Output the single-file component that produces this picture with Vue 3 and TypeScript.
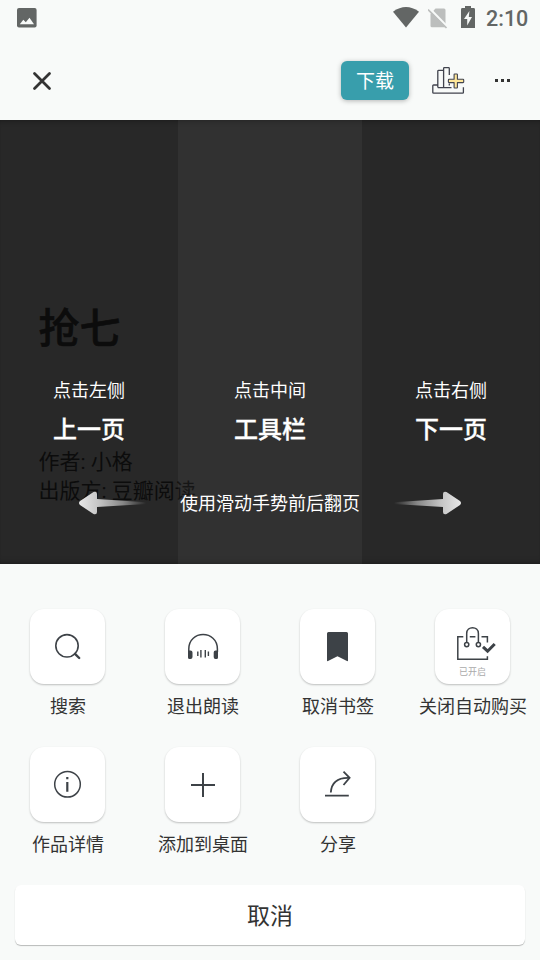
<script setup lang="ts">
interface Zone { hint: string; action: string }
interface Tool { id: string; label: string; note?: string }

const zones: Zone[] = [
  { hint: '点击左侧', action: '上一页' },
  { hint: '点击中间', action: '工具栏' },
  { hint: '点击右侧', action: '下一页' },
]

const tools: Tool[] = [
  { id: 'search', label: '搜索' },
  { id: 'listen', label: '退出朗读' },
  { id: 'bookmark', label: '取消书签' },
  { id: 'autobuy', label: '关闭自动购买', note: '已开启' },
  { id: 'info', label: '作品详情' },
  { id: 'add', label: '添加到桌面' },
  { id: 'share', label: '分享' },
]
</script>

<template>
  <div class="screen">
    <div class="status">
      <svg class="picture" width="20" height="20" viewBox="0 0 20 20">
        <rect width="19.6" height="19.6" rx="2" fill="#636665" />
        <path d="M2.8 16.3 6.3 11.8 8.8 14.2 12.5 9.8 17 16.3Z" fill="#f8faf9" />
      </svg>
      <svg class="wifi" width="26" height="21" viewBox="0 0 26 21">
        <path d="M0 4.7Q13-4.6 26 4.7L13 20.6Z" fill="#636665" />
      </svg>
      <svg class="sim" width="20" height="21" viewBox="0 0 20 21">
        <path d="M7.5.5H16Q17.5.5 17.5 2V19.3H4Q2.5 19.3 2.5 17.8V6Z" fill="#bcbebd" />
        <path d="M1 0 20 19.5" stroke="#f8faf9" stroke-width="2.4" />
        <path d="M0 1.5 18.5 20" stroke="#bcbebd" stroke-width="1.7" />
      </svg>
      <svg class="battery" width="14" height="22" viewBox="0 0 14 22">
        <path d="M4 0H10V2H12.6Q14 2 14 3.4V22H0V3.4Q0 2 1.4 2H4Z" fill="#636665" />
        <path d="M8.4 5 3 13H6.2V19.4L11 11H7.8Z" fill="#f8faf9" />
      </svg>
      <span class="clock">2:10</span>
    </div>

    <header class="bar">
      <svg class="close" width="20" height="20" viewBox="0 0 20 20">
        <path d="M2.5 2.5 17.5 17.5M17.5 2.5 2.5 17.5" stroke="#333" stroke-width="2.8" stroke-linecap="round" />
      </svg>
      <button class="download">下载</button>
      <svg class="shelf" width="34" height="30" viewBox="0 0 34 30" fill="none" stroke="#41434e" stroke-width="1.3" stroke-linejoin="round">
        <path d="M5.8 22.6V6.2Q5.8 5.4 6.6 5.4H11.6M11.6 22.6V3.5Q11.6 2.7 12.4 2.7H16.5Q17.3 2.7 17.3 3.5V10M17.3 18.5V20.5M5.8 22.7H19.5M5.8 20H1.6Q.8 20 .8 20.8V27.4Q.8 28.2 1.6 28.2H30.6Q31.4 28.2 31.4 27.4V22.3" />
        <path d="M22.6 9H24.9Q25.4 9 25.4 9.5V14.3H31Q31.7 14.3 31.7 15V17Q31.7 17.6 31 17.6H25.4V22.5Q25.4 23 24.9 23H22.6Q22.1 23 22.1 22.5V17.6H17Q16.4 17.6 16.4 17V15Q16.4 14.3 17 14.3H22.1V9.5Q22.1 9 22.6 9Z" fill="#ffe79a" stroke-width="1.1" />
      </svg>
      <div class="more"><i></i><i></i><i></i></div>
    </header>

    <main class="reader">
      <div class="book">
        <h1>抢七</h1>
        <p>作者: 小格</p>
        <p>出版方: 豆瓣阅读</p>
      </div>
      <div class="guide">
        <div v-for="z in zones" :key="z.action" class="zone">
          <span class="hint">{{ z.hint }}</span>
          <strong>{{ z.action }}</strong>
        </div>
        <div class="swipe">
          <svg width="68" height="24" viewBox="0 0 68 24">
            <defs>
              <linearGradient id="fade" x1="0" x2="1">
                <stop offset="0" stop-color="#e8e8e8" />
                <stop offset=".3" stop-color="#c4c4c4" />
                <stop offset=".65" stop-color="#888" />
                <stop offset="1" stop-color="#888" stop-opacity="0" />
              </linearGradient>
            </defs>
            <path d="M1 10 14.5 1Q18 0 18 3V8L67 11.2V13L18 16V21Q18 24 14.5 23L1 14Q-1 12 1 10Z" fill="url(#fade)" />
          </svg>
          <span>使用滑动手势前后翻页</span>
          <svg class="flip" width="68" height="24" viewBox="0 0 68 24">
            <path d="M1 10 14.5 1Q18 0 18 3V8L67 11.2V13L18 16V21Q18 24 14.5 23L1 14Q-1 12 1 10Z" fill="url(#fade)" />
          </svg>
        </div>
      </div>
    </main>

    <section class="sheet">
      <div class="grid">
        <div v-for="t in tools" :key="t.id" class="tool">
          <div class="tile">
            <svg width="75" height="75" viewBox="0 0 75 75" fill="none" stroke="#3d4247" stroke-width="1.6">
              <g v-if="t.id === 'search'">
                <circle cx="37" cy="36.8" r="11.2" />
                <path d="M45 44.8 49.2 49" stroke-width="2.4" stroke-linecap="round" />
              </g>
              <g v-else-if="t.id === 'listen'">
                <path d="M23.8 43V40C23.8 20.8 52.4 20.8 52.4 40V43" stroke-width="1.5" />
                <path d="M25.5 41.5Q27.5 41.5 27.5 43.5V48Q27.5 50 25.5 50H24.5Q23 50 23 48.5V41.5ZM50.5 41.5Q48.7 41.5 48.7 43.5V48Q48.7 50 50.5 50H51.5Q53 50 53 48.5V41.5Z" fill="#3d4247" stroke="none" />
                <path d="M32.8 42.6V47M35.9 41V48.4M40.3 41V48.4M43.4 42.6V47" stroke-width="1.4" />
              </g>
              <path v-else-if="t.id === 'bookmark'" d="M28.5 23H46.5Q48 23 48 24.5V51.5Q48 52.5 47 52L37.5 47.2 28 52Q27 52.5 27 51.5V24.5Q27 23 28.5 23Z" fill="#3d4247" stroke="none" />
              <g v-else-if="t.id === 'autobuy'" stroke-width="1.5">
                <path d="M28.3 27.7H22.8V50.3H52.4V47.2M34.8 27.7H40.4M46.5 27.7H52.4V33.5" />
                <path d="M31.7 33.4V24.5C31.7 16.8 43.4 16.8 43.4 24.5V33.4" />
                <circle cx="31.7" cy="35.6" r="2.1" />
                <circle cx="43.4" cy="35.6" r="2.1" />
                <path d="M48 37.8 52.6 42.2 59.7 35" stroke-width="3" />
              </g>
              <g v-else-if="t.id === 'info'">
                <circle cx="37.5" cy="37.3" r="12.8" stroke-width="1.5" />
                <path d="M37.3 30V32.2M37.3 35V44.8" stroke-width="2.2" />
              </g>
              <path v-else-if="t.id === 'add'" d="M38 26V50M26 38H50" stroke-width="2" />
              <g v-else stroke-width="1.8">
                <path d="M25 48.6H48.8M30.8 45.5C31.5 35 38 30.5 49 30.8" />
                <path d="M43.5 24.7 49.6 30.8 43.5 38" />
              </g>
            </svg>
            <span v-if="t.note" class="note">{{ t.note }}</span>
          </div>
          <span class="label">{{ t.label }}</span>
        </div>
      </div>
      <button class="cancel">取消</button>
    </section>
  </div>
</template>

<style>
body { margin: 0; }
</style>

<style scoped>
.screen {
  width: 540px;
  height: 960px;
  overflow: hidden;
  display: flex;
  flex-direction: column;
  background: #f8faf9;
  color: #333;
  font-family: Roboto, "Noto Sans CJK SC", sans-serif;
}
.screen * { box-sizing: border-box; }
svg { display: block; flex: none; }
button { border: 0; padding: 0; font-family: inherit; }

.status {
  height: 36px;
  flex: none;
  display: flex;
  align-items: flex-start;
  padding: 6px 11px 0 17px;
}
.picture { margin-top: 2px; }
.wifi { margin: 1px 9px 0 auto; }
.sim { margin: 2px 13px 0 0; }
.battery { margin-right: 11px; }
.clock {
  width: 43px;
  font-size: 21.5px;
  font-weight: 500;
  line-height: 26px;
  color: #636665;
}

.bar {
  height: 84px;
  flex: none;
  display: flex;
  align-items: center;
  padding: 0 30px 4px 32px;
}
.close { margin-top: 10px; }
.download {
  width: 68px;
  height: 39px;
  margin: 8px 23px 0 auto;
  padding-top: 2px;
  border-radius: 6px;
  background: #389eac;
  box-shadow: 0 1px 5px rgba(0, 0, 0, .28);
  color: #fff;
  font-size: 19px;
  line-height: 37px;
}
.shelf { margin: 8px 29px 0 0; }
.more { display: flex; gap: 3px; width: 15px; margin-top: 8px; }
.more i { width: 3px; height: 3px; background: #333; }

.reader {
  height: 444px;
  flex: none;
  position: relative;
  background: #282828;
}
.book { padding: 179px 0 0 38.5px; color: #0c0c0c; }
.book h1 {
  margin: 0 0 89px;
  font-size: 41px;
  font-weight: 500;
  line-height: 60px;
  -webkit-text-stroke: .6px currentColor;
}
.book p { margin: 0; font-size: 21px; line-height: 29px; white-space: pre; }
.guide {
  position: absolute;
  inset: 0;
  display: grid;
  grid-template-columns: 178px 184px 178px;
  box-shadow: inset 0 6px 6px -6px rgba(0, 0, 0, .4), inset 0 -7px 7px -7px rgba(0, 0, 0, .4);
}
.zone {
  display: flex;
  flex-direction: column;
  align-items: center;
  padding-top: 257px;
  color: #fff;
}
.zone:nth-child(2) { background: rgba(255, 255, 255, .045); }
.hint { font-size: 18px; line-height: 28px; }
.zone strong {
  margin-top: 7px;
  font-size: 24px;
  font-weight: 500;
  line-height: 36px;
  -webkit-text-stroke: .3px currentColor;
}
.swipe {
  position: absolute;
  top: 370px;
  left: 0;
  right: 0;
  height: 26px;
  display: flex;
  align-items: center;
  justify-content: center;
  gap: 33px;
  color: #fff;
  font-size: 18px;
}
.swipe span { margin-top: -2px; }
.flip { transform: scaleX(-1); }

.sheet { flex: 1; padding: 45px 0 0; }
.grid { display: grid; grid-template-columns: repeat(4, 135px); grid-auto-rows: 138px; }
.tool { display: flex; flex-direction: column; align-items: center; }
.tile {
  position: relative;
  width: 75px;
  height: 75px;
  border-radius: 14px;
  background: #fff;
  box-shadow: 0 1px 2px rgba(0, 0, 0, .24);
}
.note {
  position: absolute;
  left: 0;
  right: 0;
  bottom: 5px;
  text-align: center;
  color: #aaa;
  font-size: 9px;
  line-height: 14px;
}
.label { margin-top: 9px; padding-left: 1px; font-size: 18px; line-height: 28px; white-space: nowrap; }
.cancel {
  display: block;
  width: 510px;
  height: 60px;
  margin: 0 auto;
  padding-top: 4px;
  border-radius: 6px;
  background: #fff;
  box-shadow: 0 1px 1px rgba(0, 0, 0, .26);
  color: #333;
  font-size: 23px;
  line-height: 56px;
}
</style>
